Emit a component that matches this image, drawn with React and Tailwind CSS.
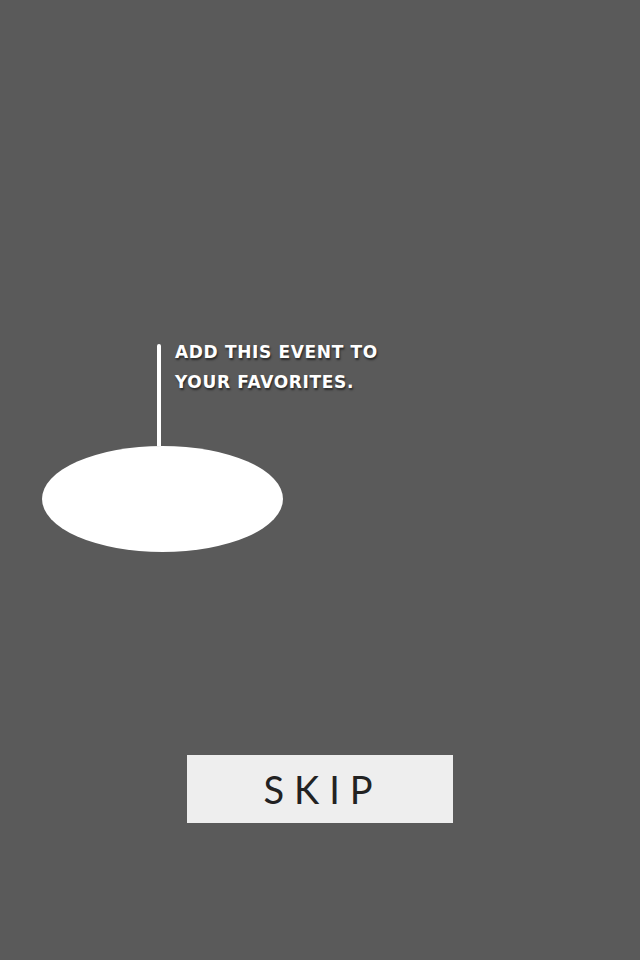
export default function App() {
  return (
    <div className="w-full h-[960px] bg-[#5a5a5a] flex flex-col overflow-hidden" style={{ fontFamily: 'Lato, "Open Sans", sans-serif' }}>
      {/* Coach mark */}
      <div className="pt-[344px] pl-[42px]">
        <div className="flex items-start">
          <div className="ml-[115px] w-[4px] h-[102px] bg-white rounded-t-full" />
          <p className="ml-[14px] -mt-[7px] text-white font-bold text-[17px] leading-[30px] tracking-[0.65px] [text-shadow:1px_2px_2px_rgba(0,0,0,0.55)]" style={{ fontFamily: '"DejaVu Sans", sans-serif' }}>
            ADD THIS EVENT TO
            <br />
            YOUR FAVORITES.
          </p>
        </div>
        <div className="w-[241px] h-[106px] rounded-[50%] bg-white" />
      </div>

      {/* Skip */}
      <div className="mt-[203px] flex justify-center">
        <button className="w-[266px] h-[68px] bg-[#eeeeee] text-[#222222] text-[38px] font-normal tracking-[10px] pl-[6px] flex items-center justify-center">
          SKIP
        </button>
      </div>
    </div>
  );
}
